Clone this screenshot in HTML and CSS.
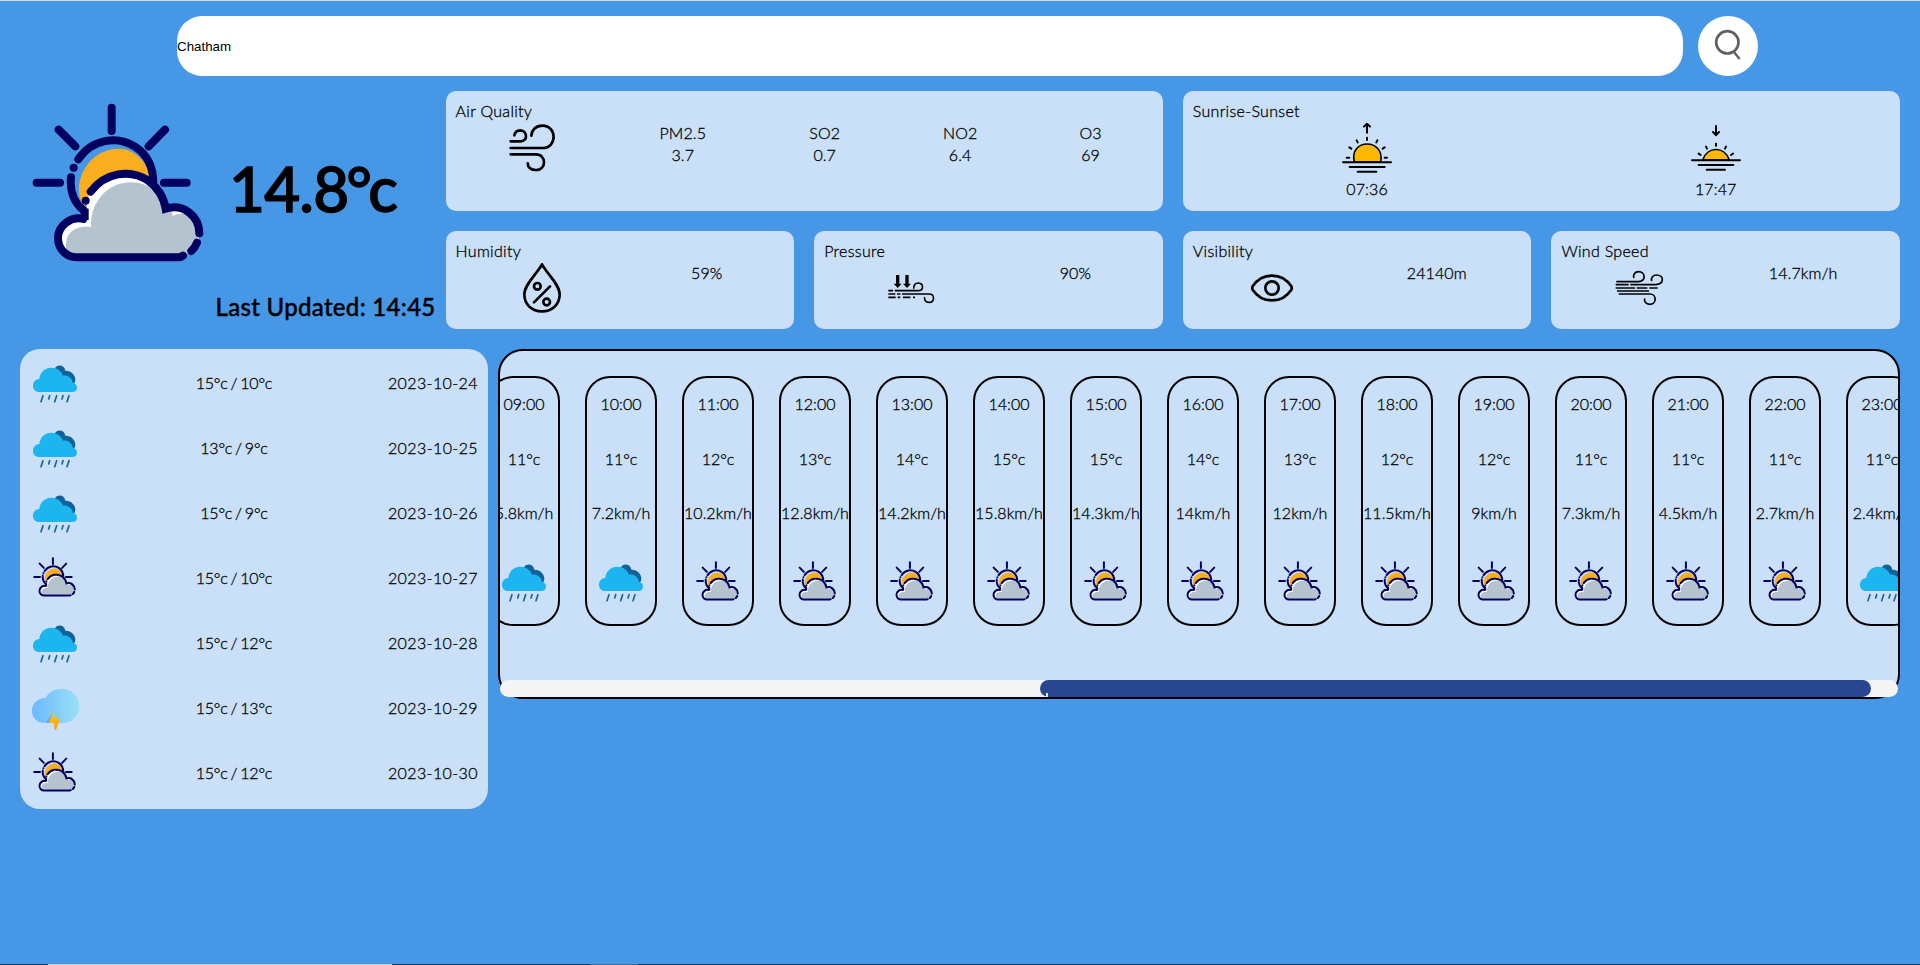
FILE: index.html
```html
<!DOCTYPE html>
<html lang="en">
<head>
<meta charset="utf-8">
<title>Weather</title>
<link rel="stylesheet" href="styles.css">
</head>
<body>
<svg class="sprite" width="0" height="0">
  <defs>
    <linearGradient id="stormFill" x1="0" x2="1"><stop offset="0" stop-color="#6bb9ff"/><stop offset="1" stop-color="#9be0f4"/></linearGradient>
    <linearGradient id="boltFill" x1="0" x2="0" y1="0" y2="1"><stop offset="0" stop-color="#ffcf00"/><stop offset="1" stop-color="#fd9a14"/></linearGradient>
  </defs>
  <symbol id="partly" viewBox="60 33 600 600">
    <path fill="#f9ad1f" d="M250 380C228 340 234 290 262 254C295 210 350 198 388 212C425 228 447 262 449 294C420 278 380 275 345 282C310 292 285 312 268 336L262 370Z"/>
    <path fill="#fff" d="M230 522C190 520 178 490 180 462C184 430 215 412 260 425V365C268 330 320 286 380 286C445 290 485 335 489 390C540 380 590 400 597 462C597 500 575 520 550 522Z"/>
    <path fill="#b5c3ce" d="M206 521C194 510 196 480 206 464C220 444 245 437 273 441C270 370 320 307 392 307C450 307 488 345 487 399C500 392 510 392 517 394V408C530 402 545 400 555 403C577 415 588 440 588 466L597 470C590 500 575 518 550 522Z"/>
    <g fill="none" stroke="#02005f" stroke-width="24" stroke-linecap="round">
      <path d="M335 83V153M176 149L226 199M495 149L446 199M110 308H180M492 308H560M235 238C275 178 350 165 405 200C445 226 460 265 460 310M213 292C209 330 220 368 252 392M250 417C215 408 174 435 174 475C174 508 200 532 230 532H380H535Q544 532 549 527M272 335C315 278 390 265 445 302C476 325 492 355 497 386C550 370 598 408 598 460M591 488Q585 504 574 513"/>
      <path d="M254 386V420" stroke-linecap="butt"/>
    </g>
    <circle cx="221" cy="263" r="12" fill="#02005f"/><circle cx="257" cy="362" r="12" fill="#02005f"/>
  </symbol>
  <symbol id="rain" viewBox="90 57 150 150">
    <path fill="#0f639c" d="M164 86C169 76 181 74 190 80Q195 84 196 92C212 91 226 104 226 119Q226 126 221 132L180 110Z"/>
    <path fill="#1cb5f0" d="M118 156C106 156 99 148 99 138C99 126 107 117 118 117C119 98 134 83 153 83C171 83 184 93 189 107C202 105 216 113 219 129C227 130 231 136 231 143C231 151 225 156 217 156Z"/>
    <path fill="none" stroke="#15659c" stroke-width="5" stroke-linecap="round" d="M129 167L123 185M149 167L146 177M170 167L164 185M189 167L186 177M207 167L201 185"/>
  </symbol>
  <symbol id="storm" viewBox="90 312 150 150">
    <path fill="url(#stormFill)" d="M134 429C111 429 96 413 96 392C96 370 114 353 137 354C145 337 163 326 185 326C215 326 238 348 238 378C238 407 216 429 187 429Z"/>
    <path fill="#528bcc" opacity=".45" d="M160 394L137 428H150Z"/>
    <path fill="url(#boltFill)" d="M160 393L147 429H162L164 450H168L180 415H164Z"/>
  </symbol>
</svg>

<main class="app">
  <form class="search">
    <input class="search-input" type="text" value="Chatham">
    <button class="search-button" type="button" aria-label="Search">
      <svg class="search-icon" viewBox="174 48 180 180" fill="none" stroke="#606060"><circle cx="262" cy="127" r="33.5" stroke-width="8"/><path stroke-width="7" d="M281 155L299 177"/></svg>
    </button>
  </form>

  <section class="overview">
    <div class="current">
      <div class="current-top">
        <svg class="current-icon"><use href="#partly"/></svg>
        <h1 class="temperature">14.8<span class="degree">°</span>c</h1>
      </div>
      <h2 class="updated">Last Updated: 14:45</h2>
    </div>

    <div class="stats">
      <article class="card wide">
        <p>Air Quality</p>
        <div class="card-row">
          <svg class="icon" viewBox="203 129 150 150" fill="none" stroke="#000" stroke-width="8" stroke-linecap="round"><path d="M214 184H244C266 184 265 152 243 151Q228 151 225 166M214 204H310C354 204 354 137 309 137C290 137 277 150 276 167M214 223H290C322 223 322 270 290 270C275 270 266 263 265 250"/></svg>
          <div class="gas gas-pm"><span>PM2.5</span><span>3.7</span></div>
          <div class="gas gas-so"><span>SO2</span><span>0.7</span></div>
          <div class="gas gas-no"><span>NO2</span><span>6.4</span></div>
          <div class="gas gas-o"><span>O3</span><span>69</span></div>
        </div>
      </article>
      <article class="card wide">
        <p>Sunrise-Sunset</p>
        <div class="card-row">
          <div class="sun-time">
            <svg class="icon" viewBox="546 129 150 150" fill="none" stroke="#000" stroke-width="6" stroke-linecap="round"><path fill="#ffb900" stroke-width="5" d="M583 246C566 174 676 174 662 246Z"/><path d="M549 247H693M569 261H674M593 275H649M621 158V133M612 140L621 131L630 140M621 173V180M590 181L593 187M652 181L649 187M568 202L574 206M674 202L668 206M560 233H568M674 233H681"/></svg>
            <span>07:36</span>
          </div>
          <div class="sun-time">
            <svg class="icon" viewBox="513 129 150 150" fill="none" stroke="#000" stroke-width="6" stroke-linecap="round"><path fill="#ffb900" stroke-width="5" d="M548 240C562 198 614 198 628 240Z"/><path d="M516 241H660M536 255H640M560 269H615M588 138V164M579 156L588 165L597 156M588 191V197M558 200L561 206M618 200L615 206M536 221L542 225M639 221L633 225"/></svg>
            <span>17:47</span>
          </div>
        </div>
      </article>
      <article class="card">
        <p>Humidity</p>
        <div class="card-row">
          <svg class="icon" viewBox="231 549 150 150" fill="none" stroke="#000" stroke-width="8" stroke-linecap="round" stroke-linejoin="round"><path d="M306 553C292 580 253 613 253 643C253 674 276 694 306 694S359 674 359 643C359 613 320 580 306 553ZM282 667L330 619"/><circle cx="292" cy="619" r="10"/><circle cx="320" cy="666" r="10"/></svg>
          <span class="value">59%</span>
        </div>
      </article>
      <article class="card">
        <p>Pressure</p>
        <div class="card-row">
          <svg class="icon" viewBox="255 549 150 150" fill="none" stroke="#000" stroke-width="5"><path d="M262 632H276M281 632H350C370 632 368 610 352 609C342 609 338 616 338 626M262 642H283M288 642H298M303 642H384C402 642 402 667 384 667C374 667 369 659 371 651M262 652H284M290 652H298M306 652H328M336 652H342"/><path fill="#000" stroke="none" d="M285 585H295V611H302L290 624L278 611H285ZM313 585H323V611H330L318 624L306 611H313Z"/></svg>
          <span class="value">90%</span>
        </div>
      </article>
      <article class="card">
        <p>Visibility</p>
        <div class="card-row">
          <svg class="icon" viewBox="261 549 150 150" fill="none" stroke="#000" stroke-width="8"><path d="M278 619C306 576 366 576 394 619Q397 624 394 629C366 672 306 672 278 629Q275 624 278 619Z"/><circle cx="336" cy="624" r="20"/></svg>
          <span class="value">24140m</span>
        </div>
      </article>
      <article class="card">
        <p>Wind Speed</p>
        <div class="card-row">
          <svg class="icon" viewBox="282 549 150 150" fill="none" stroke="#000" stroke-width="5"><path d="M289 605H357C379 602 376 575 356 575C344 575 338 585 342 594M287 614H326M331 614H408C434 612 432 585 410 585C399 585 392 593 395 603M287 624H345M350 624H382M388 624H413M291 633H387M296 642H389C411 642 411 673 389 673C378 673 372 665 374 655"/></svg>
          <span class="value">14.7km/h</span>
        </div>
      </article>
    </div>
  </section>

  <section class="forecast">
    <div class="days">
      <div class="day"><svg class="icon"><use href="#rain"/></svg><span class="range">15°c / 10°c</span><span class="date">2023-10-24</span></div>
      <div class="day"><svg class="icon"><use href="#rain"/></svg><span class="range">13°c / 9°c</span><span class="date">2023-10-25</span></div>
      <div class="day"><svg class="icon"><use href="#rain"/></svg><span class="range">15°c / 9°c</span><span class="date">2023-10-26</span></div>
      <div class="day"><svg class="icon"><use href="#partly"/></svg><span class="range">15°c / 10°c</span><span class="date">2023-10-27</span></div>
      <div class="day"><svg class="icon"><use href="#rain"/></svg><span class="range">15°c / 12°c</span><span class="date">2023-10-28</span></div>
      <div class="day"><svg class="icon"><use href="#storm"/></svg><span class="range">15°c / 13°c</span><span class="date">2023-10-29</span></div>
      <div class="day"><svg class="icon"><use href="#partly"/></svg><span class="range">15°c / 12°c</span><span class="date">2023-10-30</span></div>
    </div>

    <div class="hourly">
      <div class="viewport">
        <div class="hours">
          <div class="hour"><span>09:00</span><span>11°c</span><span>5.8km/h</span><svg class="icon"><use href="#rain"/></svg></div>
          <div class="hour"><span>10:00</span><span>11°c</span><span>7.2km/h</span><svg class="icon"><use href="#rain"/></svg></div>
          <div class="hour"><span>11:00</span><span>12°c</span><span>10.2km/h</span><svg class="icon"><use href="#partly"/></svg></div>
          <div class="hour"><span>12:00</span><span>13°c</span><span>12.8km/h</span><svg class="icon"><use href="#partly"/></svg></div>
          <div class="hour"><span>13:00</span><span>14°c</span><span>14.2km/h</span><svg class="icon"><use href="#partly"/></svg></div>
          <div class="hour"><span>14:00</span><span>15°c</span><span>15.8km/h</span><svg class="icon"><use href="#partly"/></svg></div>
          <div class="hour"><span>15:00</span><span>15°c</span><span>14.3km/h</span><svg class="icon"><use href="#partly"/></svg></div>
          <div class="hour"><span>16:00</span><span>14°c</span><span>14km/h</span><svg class="icon"><use href="#partly"/></svg></div>
          <div class="hour"><span>17:00</span><span>13°c</span><span>12km/h</span><svg class="icon"><use href="#partly"/></svg></div>
          <div class="hour"><span>18:00</span><span>12°c</span><span>11.5km/h</span><svg class="icon"><use href="#partly"/></svg></div>
          <div class="hour"><span>19:00</span><span>12°c</span><span>9km/h</span><svg class="icon"><use href="#partly"/></svg></div>
          <div class="hour"><span>20:00</span><span>11°c</span><span>7.3km/h</span><svg class="icon"><use href="#partly"/></svg></div>
          <div class="hour"><span>21:00</span><span>11°c</span><span>4.5km/h</span><svg class="icon"><use href="#partly"/></svg></div>
          <div class="hour"><span>22:00</span><span>11°c</span><span>2.7km/h</span><svg class="icon"><use href="#partly"/></svg></div>
          <div class="hour"><span>23:00</span><span>11°c</span><span>2.4km/h</span><svg class="icon"><use href="#rain"/></svg></div>
        </div>
      </div>
      <div class="scrollbar"><div class="thumb"></div></div>
    </div>
  </section>
  <footer class="edge"></footer>
</main>
</body>
</html>
```

FILE: styles.css
```css
* { box-sizing: border-box; }
body {
  margin: 0;
  background: #4697e6;
  color: #000;
  font-family: Lato, "Open Sans", sans-serif;
  font-size: 16px;
  font-weight: 300;
  line-height: 22px;
  letter-spacing: 0.1px;
  -webkit-text-stroke: 0.3px #000;
}
p, h1, h2 { margin: 0; }
.sprite { position: absolute; }
.app {
  height: 965px;
  border-top: 1px solid #d5d9dc;
  display: flex;
  flex-direction: column;
  overflow: hidden;
}
.search {
  display: flex;
  gap: 15px;
  padding: 15px 0 15px 177px;
}
.search-input {
  width: 1506px;
  height: 60px;
  padding: 0;
  border: 0;
  border-radius: 25px;
  background: #fff;
  color: #000;
  font: 13.333px "Liberation Sans", Arial, sans-serif;
  -webkit-text-stroke: 0;
}
.search-button {
  width: 60px;
  height: 60px;
  padding: 0;
  border: 0;
  border-radius: 50%;
  background: #fff;
}
.search-icon { display: block; width: 60px; height: 60px; }

.overview { display: flex; padding: 0 20px; }
.current { width: 425.6px; height: 238px; flex: none; }
.current-top { display: flex; height: 200px; }
.current-icon { width: 200px; height: 200px; flex: none; }
.temperature {
  padding: 60px 0 0 9px;
  font-size: 62px;
  line-height: 74px;
  font-weight: 500;
  letter-spacing: -0.8px;
  -webkit-text-stroke: 1.4px #000;
}
.degree { margin: 0 -3px 0 -2px; }
.updated {
  padding-right: 10px;
  text-align: right;
  line-height: 33px;
  font-size: 24px;
  font-weight: 500;
  letter-spacing: 0.3px;
  -webkit-text-stroke: 0.4px #000;
  margin-top: -1px;
  white-space: nowrap;
}
.stats {
  width: 1454.4px;
  flex: none;
  display: grid;
  grid-template-columns: repeat(4, 1fr);
  grid-template-rows: 120px 98px;
  gap: 20px;
}
.card { padding: 9px 10px; border-radius: 10px; background: #c9e0f8; }
.card p { letter-spacing: 0.3px; }
.wide { grid-column: span 2; }
.card-row { display: flex; justify-content: space-around; }
.card-row .icon { margin-top: 1px; }
.icon { display: block; width: 50px; height: 50px; flex: none; }
.gas { display: flex; flex-direction: column; align-items: center; }
.gas-pm { width: 47px; }
.gas-so { width: 32px; }
.gas-no { width: 34px; }
.gas-o { width: 22px; }
.sun-time { width: 50px; display: flex; flex-direction: column; align-items: center; gap: 5px; }

.forecast { display: flex; align-items: flex-start; gap: 10px; padding: 20px 20px 0; }
.days {
  width: 468px;
  display: flex;
  flex-direction: column;
  gap: 15px;
  padding: 10px;
  border-radius: 20px;
  background: #c9e0f8;
}
.day { display: flex; align-items: center; justify-content: space-between; }
.day span { padding-bottom: 2px; }
.range { letter-spacing: -0.2px; word-spacing: -1.2px; }
.date { letter-spacing: 0.4px; }
.hourly {
  position: relative;
  width: 1402px;
  height: 350px;
  border: 2px solid #000;
  border-radius: 25px;
  background: #c9e0f8;
}
.viewport { height: 346px; overflow: hidden; border-radius: 23px; }
.hours { display: flex; gap: 25px; margin: 25px 0 0 -12px; }
.hour {
  width: 72px;
  height: 250px;
  flex: none;
  display: flex;
  flex-direction: column;
  align-items: center;
  justify-content: space-around;
  border: 2px solid #000;
  border-radius: 25px;
  white-space: nowrap;
  letter-spacing: 0;
}
.hour span { margin: -1px 0 1px; }
.scrollbar {
  position: absolute;
  left: 0;
  right: 0;
  bottom: 0;
  height: 17px;
  padding: 0 27px 0 540px;
  border-radius: 10px;
  background: #f5f5f5;
}
.thumb { height: 17px; border-radius: 10px; background: #294691; }
.thumb::before {
  content: "";
  display: block;
  width: 2px;
  height: 17px;
  margin-left: 6px;
  background: linear-gradient(transparent 13px, #dbeafa 13px);
}
.edge {
  height: 1px;
  margin-top: auto;
  background: linear-gradient(90deg, #173a5a 48px, #bdcddd 48px 392px, #173a5a 392px 590px, #466b8d 590px 638px, #173a5a 638px);
}
```
